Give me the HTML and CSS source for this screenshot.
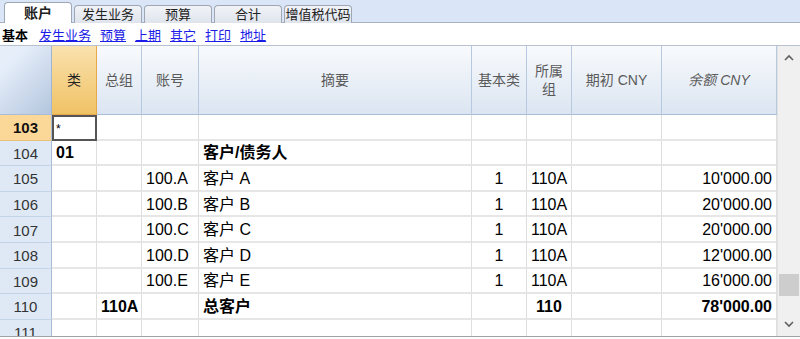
FILE: index.html
```html
<!DOCTYPE html>
<html lang="zh-CN">
<head>
  <meta charset="UTF-8" />
  <title>账户</title>
  <link rel="stylesheet" href="styles.css">
</head>
<body>
  <!-- Table tabs -->
  <div class="tabs">
    <div class="tab active">账户</div>
    <div class="tab">发生业务</div>
    <div class="tab">预算</div>
    <div class="tab">合计</div>
    <div class="tab">增值税代码</div>
  </div>

  <!-- Views -->
  <div class="views">
    <b>基本</b>
    <a href="#">发生业务</a>
    <a href="#">预算</a>
    <a href="#">上期</a>
    <a href="#">其它</a>
    <a href="#">打印</a>
    <a href="#">地址</a>
  </div>

  <div class="sheet">
    <div class="grid">
      <div class="row head">
        <div class="hd corner"></div>
        <div class="hd cur">类</div>
        <div class="hd">总组</div>
        <div class="hd">账号</div>
        <div class="hd">摘要</div>
        <div class="hd">基本类</div>
        <div class="hd">所属<br>组</div>
        <div class="hd">期初 CNY</div>
        <div class="hd"><i>余额 CNY</i></div>
      </div>

      <div class="row">
        <div class="num sel">103</div>
        <div class="c focus">*</div>
        <div class="c"></div><div class="c"></div><div class="c"></div>
        <div class="c"></div><div class="c"></div><div class="c"></div><div class="c"></div>
      </div>
      <div class="row">
        <div class="num">104</div>
        <div class="c b">01</div>
        <div class="c"></div><div class="c"></div>
        <div class="c b">客户/债务人</div>
        <div class="c"></div><div class="c"></div><div class="c"></div><div class="c"></div>
      </div>
      <div class="row">
        <div class="num">105</div>
        <div class="c"></div><div class="c"></div>
        <div class="c">100.A</div>
        <div class="c">客户 A</div>
        <div class="c m">1</div>
        <div class="c">110A</div>
        <div class="c"></div>
        <div class="c r">10'000.00</div>
      </div>
      <div class="row">
        <div class="num">106</div>
        <div class="c"></div><div class="c"></div>
        <div class="c">100.B</div>
        <div class="c">客户 B</div>
        <div class="c m">1</div>
        <div class="c">110A</div>
        <div class="c"></div>
        <div class="c r">20'000.00</div>
      </div>
      <div class="row">
        <div class="num">107</div>
        <div class="c"></div><div class="c"></div>
        <div class="c">100.C</div>
        <div class="c">客户 C</div>
        <div class="c m">1</div>
        <div class="c">110A</div>
        <div class="c"></div>
        <div class="c r">20'000.00</div>
      </div>
      <div class="row">
        <div class="num">108</div>
        <div class="c"></div><div class="c"></div>
        <div class="c">100.D</div>
        <div class="c">客户 D</div>
        <div class="c m">1</div>
        <div class="c">110A</div>
        <div class="c"></div>
        <div class="c r">12'000.00</div>
      </div>
      <div class="row">
        <div class="num">109</div>
        <div class="c"></div><div class="c"></div>
        <div class="c">100.E</div>
        <div class="c">客户 E</div>
        <div class="c m">1</div>
        <div class="c">110A</div>
        <div class="c"></div>
        <div class="c r">16'000.00</div>
      </div>
      <div class="row">
        <div class="num">110</div>
        <div class="c"></div>
        <div class="c b">110A</div>
        <div class="c"></div>
        <div class="c b">总客户</div>
        <div class="c"></div>
        <div class="c b m">110</div>
        <div class="c"></div>
        <div class="c r b">78'000.00</div>
      </div>
      <div class="row">
        <div class="num">111</div>
        <div class="c"></div><div class="c"></div><div class="c"></div><div class="c"></div>
        <div class="c"></div><div class="c"></div><div class="c"></div><div class="c"></div>
      </div>
    </div>

    <!-- Vertical scrollbar -->
    <div class="scroll">
      <svg class="arrow" width="12" height="8" viewBox="0 0 12 8"><path d="M2 6 L6 2 L10 6" fill="none" stroke="#606060" stroke-width="1.6"/></svg>
      <div class="track"><div class="thumb"></div></div>
      <svg class="arrow" width="12" height="8" viewBox="0 0 12 8"><path d="M2 2 L6 6 L10 2" fill="none" stroke="#606060" stroke-width="1.6"/></svg>
    </div>
  </div>
</body>
</html>
```

FILE: styles.css
```css
/* Basic Reset */
* {
  margin: 0;
  padding: 0;
  box-sizing: border-box;
}
body {
  font-family: "Liberation Sans", "Noto Sans CJK SC", sans-serif;
  background-color: #fff;
  color: #000;
  width: 800px;
  height: 339px;
  overflow: hidden;
}
/* Tabs */
.tabs {
  height: 23px;
  background-color: #dae6f8;
  display: flex;
  align-items: flex-end;
  gap: 2px;
  padding-left: 4px;
  border-bottom: 1px solid #a9b3c0;
}
.tab {
  width: 68px;
  height: 18px;
  margin-bottom: -1px;
  font-size: 13px;
  line-height: 17px;
  text-align: center;
  color: #222;
  background: linear-gradient(#f1f3f7, #dfe4ec);
  border: 1px solid #9ea7b3;
  border-bottom: none;
  border-radius: 4px 4px 0 0;
}
.tab.active {
  height: 21px;
  line-height: 21px;
  font-weight: bold;
  font-size: 14px;
  background: #fff;
}
/* Views */
.views {
  height: 22px;
  display: flex;
  align-items: center;
  gap: 9px;
  padding-left: 2px;
  font-size: 13px;
}
.views b {
  margin-right: 2px;
}
.views a {
  color: #1c1ce8;
}
/* Sheet */
.sheet {
  height: 292px;
  display: flex;
  border-top: 1px solid #b8c2ce;
  border-bottom: 1px solid #a2a2a2;
  overflow: hidden;
}
.grid {
  width: 777px;
}
.row {
  display: grid;
  grid-template-columns: 52px 45px 45px 57px 273px 55px 45px 90px 115px;
  height: 25.6px;
  font-size: 16px;
  line-height: 18px;
}
.row.head {
  height: 69px;
}
.hd {
  display: flex;
  align-items: center;
  justify-content: center;
  text-align: center;
  font-size: 14px;
  line-height: 18px;
  color: #5a5a5a;
  background: linear-gradient(#f8fafd, #dbe5f1);
  border-right: 1px solid #b7c9e0;
  border-bottom: 1px solid #a9bdd6;
}
.hd.corner {
  background: linear-gradient(135deg, #e6eefa 20%, #b3c6de);
  border-right: 1px solid #9fb5d1;
}
.hd.cur {
  color: #222;
  background: linear-gradient(#fae1ae, #f0c265);
  border-right: 1px solid #e6a849;
  border-bottom: 1px solid #e6a849;
}
/* Row numbers */
.num {
  display: flex;
  align-items: center;
  justify-content: center;
  padding-top: 2px;
  font-size: 15px;
  color: #333;
  background-color: #dfe9f6;
  border-right: 1px solid #a9bdd6;
  border-bottom: 1px solid #c3d3e8;
}
.num.sel {
  font-weight: bold;
  color: #111;
  background-color: #fcd898;
  border-bottom-color: #e9c07c;
}
/* Cells */
.c {
  display: flex;
  align-items: center;
  padding: 2px 4px 0;
  white-space: nowrap;
  border-right: 1px solid #dedede;
  border-bottom: 2px solid #e6e6e6;
}
.c.r {
  justify-content: flex-end;
}
.c.m {
  justify-content: center;
}
.c.b {
  font-weight: bold;
}
.c.focus {
  align-items: flex-start;
  padding: 3px 0 0 2px;
  font-size: 12px;
  border: 2px solid #555;
}
/* Scrollbar */
.scroll {
  width: 23px;
  display: flex;
  flex-direction: column;
  align-items: center;
  background-color: #f0f0f0;
  border-left: 1px solid #e2e2e2;
}
.arrow {
  margin: 8px 0;
}
.track {
  flex: 1;
  width: 100%;
  position: relative;
}
.thumb {
  position: absolute;
  left: 1px;
  right: 1px;
  top: 204px;
  height: 22px;
  background-color: #cdcdcd;
}
```
